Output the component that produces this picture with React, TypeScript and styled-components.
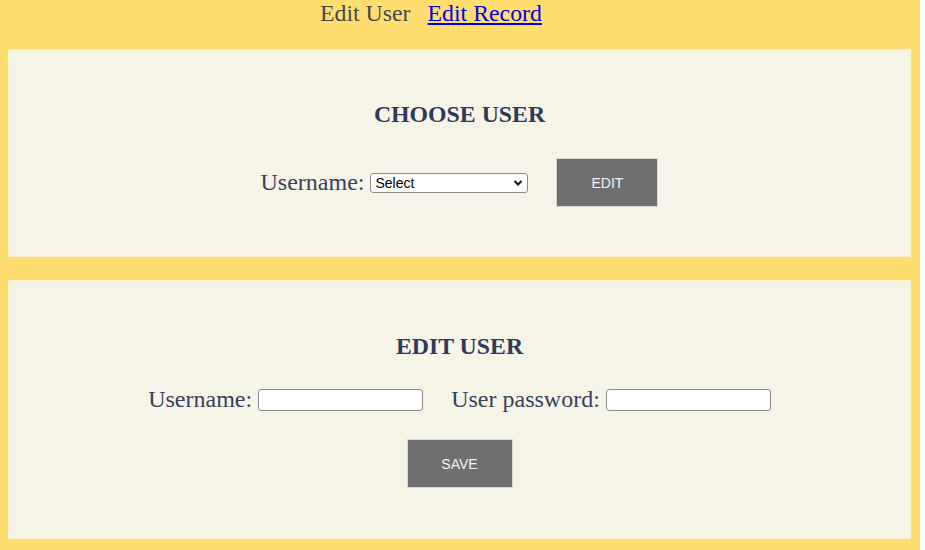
import React from "react";
import styled, { createGlobalStyle } from "styled-components";

const Global = createGlobalStyle`
  html, body { margin: 0; padding: 0; background: #ffffff; }
  body { font-family: "Liberation Serif", "Times New Roman", serif; }
`;

const Page = styled.div`
  width: 920px;
  min-height: 550px;
  background: #ffde6f;
  box-sizing: border-box;
  padding: 0 9px 11px 8px;
  display: flex;
  flex-direction: column;
`;

const Nav = styled.nav`
  display: flex;
  align-items: center;
  height: 27px;
  padding-left: 312px;
  margin-bottom: 22px;
  gap: 17px;
  font-size: 23.8px;
  line-height: 27px;
`;

const NavText = styled.span`
  color: #454850;
`;

const NavLink = styled.a`
  color: #0000ee;
  text-decoration: underline;
  text-underline-offset: 2px;
`;

const Panel = styled.section<{ $top: number; $bottom: number; $gap: number }>`
  background: #f6f4e6;
  border: 1px solid #f9f1cc;
  box-sizing: border-box;
  display: flex;
  flex-direction: column;
  align-items: center;
  padding-top: ${(p) => p.$top}px;
  padding-bottom: ${(p) => p.$bottom}px;
  gap: ${(p) => p.$gap}px;
  & + & {
    margin-top: 23px;
  }
`;

const Heading = styled.h2`
  margin: 0;
  font-size: 23.8px;
  line-height: 27px;
  font-weight: bold;
  color: #2f3a5a;
`;

const Row = styled.div<{ $gap: number }>`
  display: flex;
  align-items: center;
  gap: ${(p) => p.$gap}px;
`;

const Field = styled.label`
  display: flex;
  align-items: center;
  gap: 6px;
  font-size: 24px;
  line-height: 27px;
  color: #38415e;
`;

const SelectWrap = styled.span`
  position: relative;
  display: inline-flex;
`;

const Select = styled.select`
  appearance: none;
  -webkit-appearance: none;
  width: 158px;
  height: 20px;
  box-sizing: border-box;
  border: 1px solid #8d8d8d;
  border-radius: 3px;
  background: #ffffff;
  padding: 0 0 0 4px;
  font-family: "Liberation Sans", Arial, sans-serif;
  font-size: 14px;
  color: #000000;
`;

const Chevron = styled.svg`
  position: absolute;
  right: 5px;
  top: 6px;
  pointer-events: none;
`;

const TextInput = styled.input`
  width: 165px;
  height: 22px;
  box-sizing: border-box;
  border: 1px solid #8a8a8a;
  border-radius: 3px;
  background: #ffffff;
`;

const Button = styled.button<{ $w: number }>`
  width: ${(p) => p.$w}px;
  height: 49px;
  flex-shrink: 0;
  box-sizing: border-box;
  background: #6f6f6f;
  border: 1px solid #d9d7cc;
  color: #f2f2f2;
  font-family: "Liberation Sans", Arial, sans-serif;
  font-size: 14px;
  text-transform: uppercase;
  padding: 0;
`;

export default function App() {
  return (
    <>
      <Global />
      <Page>
        <Nav>
          <NavText>Edit User</NavText>
          <NavLink href="#">Edit Record</NavLink>
        </Nav>
        <Panel $top={51} $bottom={49} $gap={30}>
          <Heading>CHOOSE USER</Heading>
          <Row $gap={28}>
            <Field>
              Username:
              <SelectWrap>
                <Select defaultValue="">
                  <option value="">Select</option>
                </Select>
                <Chevron width="10" height="8" viewBox="0 0 10 8">
                  <path d="M1.5 2 L5 5.5 L8.5 2" fill="none" stroke="#111" strokeWidth="2" />
                </Chevron>
              </SelectWrap>
            </Field>
            <Button $w={102}>Edit</Button>
          </Row>
        </Panel>
        <Panel $top={52} $bottom={50} $gap={26}>
          <Heading>EDIT USER</Heading>
          <Row $gap={28}>
            <Field>
              Username:
              <TextInput type="text" />
            </Field>
            <Field>
              User password:
              <TextInput type="password" />
            </Field>
          </Row>
          <Button $w={106}>Save</Button>
        </Panel>
      </Page>
    </>
  );
}
